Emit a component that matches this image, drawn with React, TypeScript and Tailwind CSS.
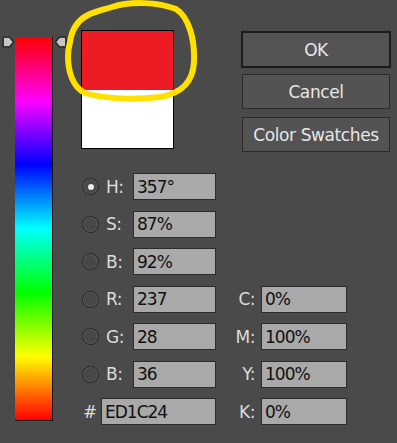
import React from 'react';

const font = { fontFamily: '"DejaVu Sans", Verdana, sans-serif' };

const leftRows = [
  { key: 'H', value: '357°', selected: true },
  { key: 'S', value: '87%' },
  { key: 'B', value: '92%' },
  { key: 'R', value: '237', cmyk: { key: 'C', value: '0%' } },
  { key: 'G', value: '28', cmyk: { key: 'M', value: '100%' } },
  { key: 'B', value: '36', cmyk: { key: 'Y', value: '100%' } },
];

const Marker = ({ flip }: { flip?: boolean }) => (
  <svg width="13" height="12" viewBox="0 0 13 12" style={flip ? { transform: 'scaleX(-1)' } : undefined}>
    <path d="M2.5 1.2 H7.5 L11.5 6 L7.5 10.8 H2.5 Q1.2 10.8 1.2 9.5 V2.5 Q1.2 1.2 2.5 1.2 Z" fill="#c6c6c6" stroke="#1e1e1e" strokeWidth="1.3" strokeLinejoin="round" />
  </svg>
);

const Radio = ({ selected }: { selected?: boolean }) => (
  <div className="w-[17px] h-[17px] rounded-full border border-[#262626] bg-[#484848] shadow-[inset_0_0_0_1px_#5c5c5c] flex items-center justify-center">
    {selected && <div className="w-[6px] h-[6px] rounded-full bg-[#ececec]" />}
  </div>
);

const Field = ({ value, w }: { value: string; w: string }) => (
  <div className={`${w} h-[27px] bg-[#a9a9a9] border border-[#2c2c2c] flex items-center pl-[3px] pt-[2px] text-[17px] tracking-[-1px] text-[#111]`}>
    {value}
  </div>
);

const Label = ({ children, className }: { children: React.ReactNode; className: string }) => (
  <div className={`${className} pt-[2px] text-[17px] tracking-[-0.5px] text-[#dcdcdc]`}>{children}</div>
);

const Button = ({ children, primary }: { children: React.ReactNode; primary?: boolean }) => (
  <div
    className={
      primary
        ? 'w-[150px] h-[37px] border-2 border-[#1c1c1c] bg-[#545454] flex items-center justify-center pt-[3px] text-[17px] tracking-[-0.4px] text-[#e6e6e6]'
        : 'w-[148px] h-[35px] ml-[1px] border border-[#2a2a2a] bg-[#535353] flex items-center justify-center pt-[3px] text-[17px] tracking-[-0.4px] text-[#e6e6e6]'
    }
  >
    {children}
  </div>
);

export default function App() {
  return (
    <div className="relative w-[397px] h-[443px] bg-[#4a4a4a] overflow-hidden flex" style={font}>
      {/* Hue spectrum */}
      <div className="pl-[15px] pt-[37px]">
        <div className="relative w-[38px] h-[384px] border-r border-b border-[#111] bg-[linear-gradient(to_bottom,#ff0000,#ff00ff,#0000ff,#00ffff,#00ff00,#ffff00,#ff0000)]">
          <div className="absolute -left-[13px] -top-[1px]">
            <Marker />
          </div>
          <div className="absolute -right-[15px] -top-[1px]">
            <Marker flip />
          </div>
        </div>
      </div>

      <div className="ml-[28px] pt-[30px] flex flex-col">
        <div className="flex h-[124px]">
          <div className="w-[93px] h-[119px] border border-black flex flex-col">
            <div className="h-[59px] bg-[#ed1c24]" />
            <div className="flex-1 bg-white" />
          </div>
          <div className="ml-[67px] mt-[1px] flex flex-col">
            <Button primary>OK</Button>
            <div className="mt-[6px]">
              <Button>Cancel</Button>
            </div>
            <div className="mt-[8px]">
              <Button>Color Swatches</Button>
            </div>
          </div>
        </div>

        <div className="mt-[19px] flex flex-col gap-[10.5px]">
          {leftRows.map((r, i) => (
            <div key={i} className="flex items-center h-[27px]">
              <div className="ml-[1px]">
                <Radio selected={r.selected} />
              </div>
              <Label className="ml-[7px] w-[27px]">{r.key}:</Label>
              <Field value={r.value} w="w-[83px]" />
              {r.cmyk && (
                <>
                  <Label className="w-[45px] pr-[6px] text-right">{r.cmyk.key}:</Label>
                  <Field value={r.cmyk.value} w="w-[86px]" />
                </>
              )}
            </div>
          ))}
          <div className="flex items-center h-[27px]">
            <Label className="w-[20px] pl-[2px]">#</Label>
            <Field value="ED1C24" w="w-[115px]" />
            <Label className="w-[45px] pr-[6px] text-right">K:</Label>
            <Field value="0%" w="w-[86px]" />
          </div>
        </div>
      </div>

      {/* hand-drawn highlight */}
      <svg className="absolute left-0 top-0 pointer-events-none" width="397" height="443" viewBox="0 0 397 443">
        <path
          d="M 70 42 C 72 28, 78 20, 88 15 C 96 11, 102 10, 112 7 C 130 1, 158 2, 176 9 C 189 17, 195 40, 194 62 C 193 82, 182 93, 160 97 C 135 100, 105 99, 85 93 C 72 87, 68 70, 68 56 C 68 50, 69 46, 70 42 Z"
          fill="none"
          stroke="#ffe000"
          strokeWidth="6"
          strokeLinejoin="round"
        />
      </svg>
    </div>
  );
}
